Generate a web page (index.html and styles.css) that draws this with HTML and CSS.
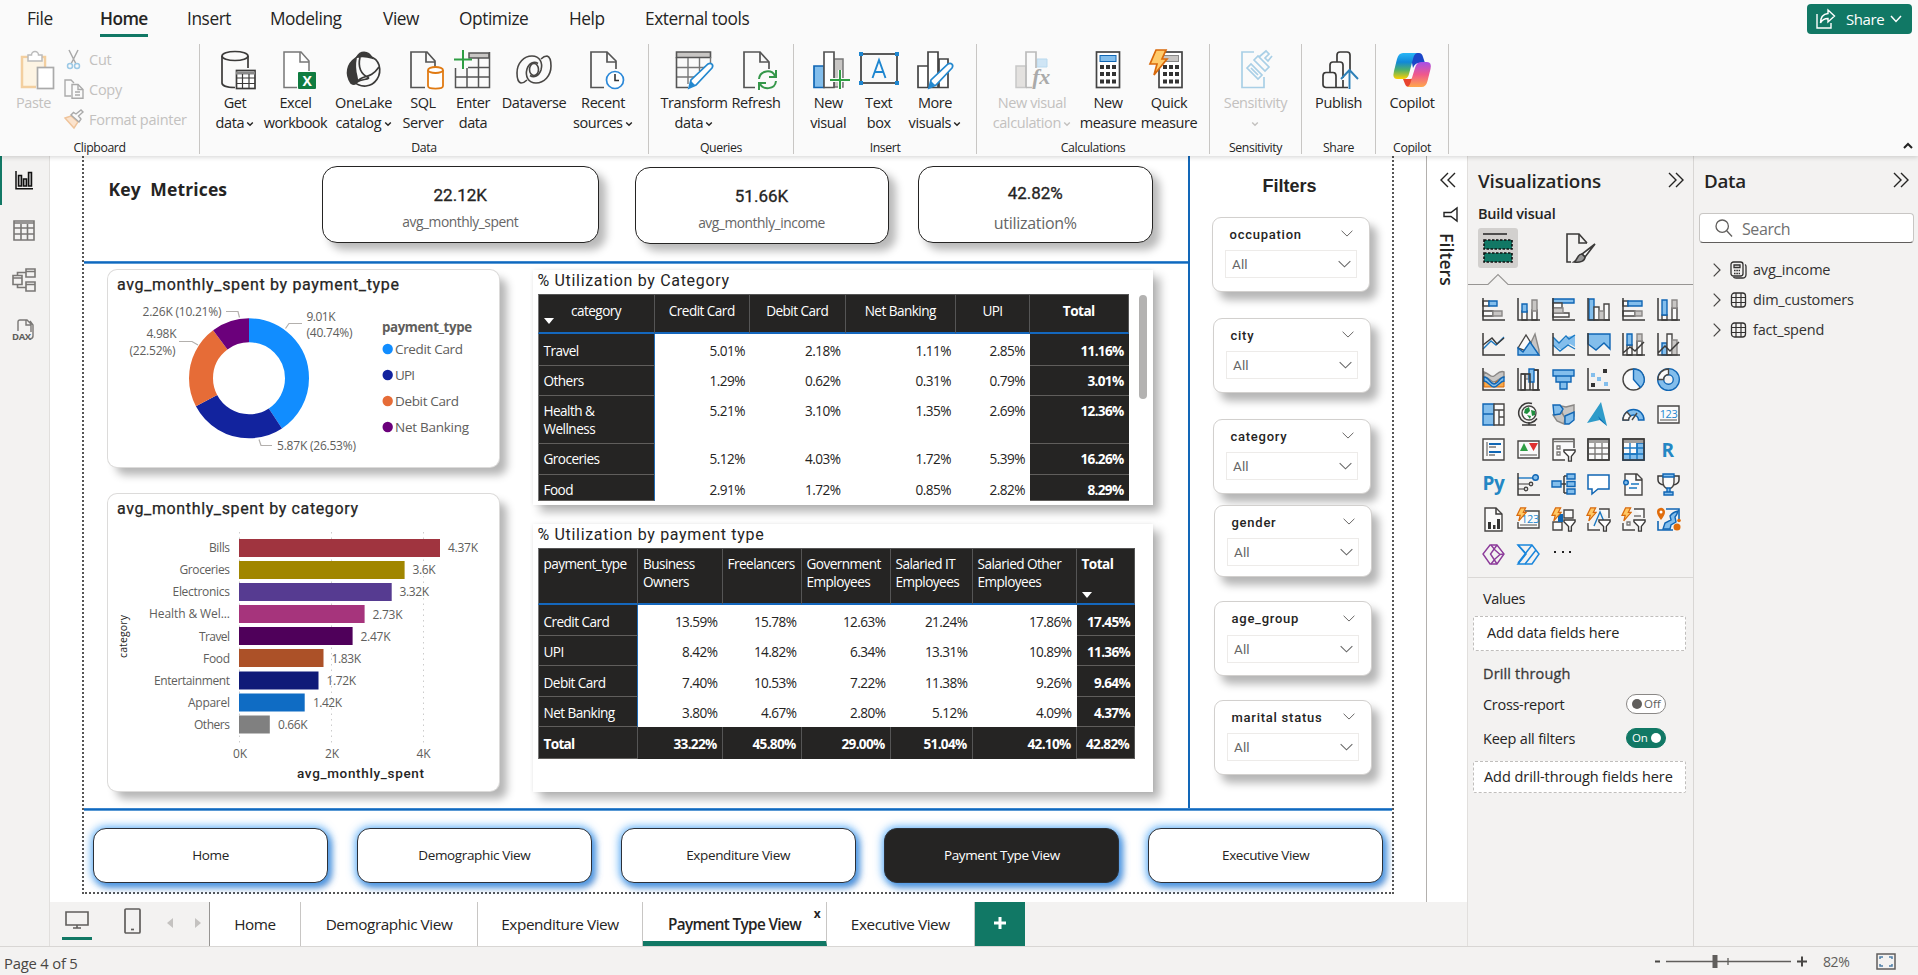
FILE: index.html
```html
<!DOCTYPE html>
<html lang="en">
<head>
<meta charset="utf-8">
<title>Payment Type View</title>
<link rel="stylesheet" href="styles.css">
</head>
<body>
<svg class="defs" width="0" height="0">
  <defs>
    <symbol id="chev" viewBox="0 0 10 6"><path d="M1.500 1l3.500 3.500L8.500 1" fill="none" stroke="currentColor" stroke-width="1.800"/></symbol>
    <symbol id="thin" viewBox="0 0 14 8"><path d="M.7 .8L7 7 13.3 .8" fill="none" stroke="currentColor" stroke-width="1.1"/></symbol>
    <symbol id="dbl" viewBox="0 0 16 16"><path d="M1 1l7 7-7 7M8 1l7 7-7 7" fill="none" stroke="currentColor" stroke-width="1.4"/></symbol>
    <symbol id="bolt" viewBox="0 0 12 16"><path d="M5 .8h5.500L8 5.600h3.200L3 15l1.600-6H1z" fill="#ffc864" stroke="#d9690b" stroke-width="1.3"/></symbol>
    <symbol id="funnel" viewBox="0 0 14 14"><path d="M1 1h12v2L9 8v5H6V8L1 3z" fill="#fff" stroke="#3b3a39" stroke-width="1.5"/></symbol>
    <symbol id="tbl" viewBox="0 0 16 16"><rect x="1" y="1" width="14" height="14" rx="3" fill="none" stroke="#323130" stroke-width="1.3"/><path d="M5.500 1v14M10.500 1v14M1 5.500h14M1 10.500h14" stroke="#323130" stroke-width="1.2"/></symbol>
    <linearGradient id="cpA" x1="0" y1="0" x2="0" y2="1"><stop offset="0" stop-color="#29b6f6"/><stop offset=".35" stop-color="#1088d8"/><stop offset=".65" stop-color="#4fb06a"/><stop offset="1" stop-color="#ffd000"/></linearGradient>
    <linearGradient id="cpB" x1="0" y1="0" x2="0" y2="1"><stop offset="0" stop-color="#a64fe8"/><stop offset=".5" stop-color="#f0588c"/><stop offset="1" stop-color="#ffa84c"/></linearGradient>
  </defs>
</svg>

<header class="ribbon">
  <nav class="menu">
    <span>File</span><span class="active"><b>Home</b></span><span>Insert</span><span>Modeling</span><span>View</span><span>Optimize</span><span>Help</span><span>External tools</span>
    <button class="share"><svg width="20" height="20" viewBox="0 0 20 20" fill="none" stroke="#fff" stroke-width="1.4"><path d="M1 5v14h14v-5"/><path d="M12 1l6.500 6L12 13V9.500C8 9.500 6 11 4.500 14 4.500 8.500 7.500 5 12 4.500z"/></svg><span>Share</span><svg width="12" height="8" viewBox="0 0 12 8" fill="none" stroke="#fff" stroke-width="1.5"><path d="M1 1l5 5.500L11 1"/></svg></button>
  </nav>
  <div class="groups">
    <section class="group g-clip">
      <div class="items">
        <div class="paste off"><svg width="36" height="40" viewBox="0 0 36 40" fill="none"><path d="M4 9h20v10h-6v17H4z" fill="#fdf4e3"/><path d="M9 7H3v30h14M23 7h3v11" stroke="#f3cf9f" stroke-width="2.500"/><path d="M9 5h3.500a3.500 3.500 0 0 1 7 0H23v6H9z" fill="#fff" stroke="#bbb" stroke-width="1.500"/><rect x="18.500" y="17.500" width="16" height="21" fill="#fff" stroke="#aaa" stroke-width="1.700"/></svg><span>Paste</span></div>
        <div class="clips off">
          <div><svg width="20" height="20" viewBox="0 0 20 20" fill="none"><path d="M5 1l7 14M14 1L7 15" stroke="#aaa" stroke-width="1.500"/><circle cx="6" cy="17" r="2.500" stroke="#9cc9e6" stroke-width="1.500"/><circle cx="13" cy="17" r="2.500" stroke="#9cc9e6" stroke-width="1.500"/></svg><span>Cut</span></div>
          <div><svg width="20" height="20" viewBox="0 0 20 20" fill="none" stroke="#aaa" stroke-width="1.400"><path d="M7 17H1V1h6l3 3"/><path d="M8 5.500h6l5 5V19.300H8z" fill="#fafafa"/><path d="M14 5.500v5h5M11 13h5M11 16h5"/></svg><span>Copy</span></div>
          <div><svg width="20" height="20" viewBox="0 0 20 20" fill="none"><path d="M1 9l6-2 7 6-4 6z" fill="#fbe3cd" stroke="#efc49b" stroke-width="1.400"/><path d="M7 6l8 7 2-3-2.500-3L19 3l-2-2-5 4-2.500-1.500z" fill="#fafafa" stroke="#aaa" stroke-width="1.400"/></svg><span>Format painter</span></div>
        </div>
      </div>
      <footer>Clipboard</footer>
    </section>
    <section class="group g-data">
      <div class="items">
        <div class="cmd sh5"><svg width="36" height="40" viewBox="0 0 36 40" fill="none" stroke="#3b3a39" stroke-width="1.700"><path d="M2 6v27c0 2.500 5 4.500 13 4.500M28 6v12"/><ellipse cx="15" cy="6" rx="13" ry="4.500"/><rect x="16.500" y="20.500" width="18.500" height="18" fill="#fff"/><path d="M16 23h19" stroke="#888" stroke-width="3"/><path d="M16 28h19M16 33.500h19M22.500 24v15M29 24v15" stroke-width="1.200"/></svg><span>Get<br>data <svg class="c"><use href="#chev"/></svg></span></div>
        <div class="cmd sh5"><svg width="36" height="40" viewBox="0 0 36 40" fill="none"><path d="M17 37.500H4V2h17l8 9v10" fill="#fff" stroke="#777" stroke-width="1.500"/><path d="M20 2v10h9" stroke="#777" stroke-width="1.500"/><rect x="18" y="22" width="18" height="17" rx="1" fill="#107c41"/><text x="27" y="36" class="xl">X</text></svg><span>Excel<br>workbook</span></div>
        <div class="cmd"><svg width="36" height="40" viewBox="0 0 36 40" fill="none" stroke="#3b3a39" stroke-width="1.700"><path d="M10 8C1 14-1 24 5 33c3 2 5 1 6-1 2-4-4-9-1-24z" fill="#3b3a39"/><path d="M11 7c3-6 11-7 15 1-6-2-10-2-15-1z" fill="#3b3a39"/><path d="M11 7c9-3 19-1 22 8 3 11-4 20-13 21-6 .500-10-2-13-5"/><path d="M14 7c-2 9 0 17 9 21M11 32c5-8 13-2 22-15M11 32c5-3 9-2 12-4"/></svg><span>OneLake<br>catalog <svg class="c"><use href="#chev"/></svg></span></div>
        <div class="cmd sh5"><svg width="36" height="40" viewBox="0 0 36 40" fill="none"><path d="M17 37.500H3V2h16l8 9v6" stroke="#555" stroke-width="1.700"/><path d="M18 2v10h9" stroke="#555" stroke-width="1.700"/><path d="M20 20v16c0 3.500 15 3.500 15 0V20" stroke="#e07a12" stroke-width="1.800" fill="#fff"/><ellipse cx="27.500" cy="20" rx="7.500" ry="3" fill="#fff" stroke="#e07a12" stroke-width="1.800"/></svg><span>SQL<br>Server</span></div>
        <div class="cmd"><svg width="38" height="40" viewBox="0 0 38 40" fill="none" stroke="#555"><path d="M15 3h20v5H15z" fill="#c8c6c4" stroke-width="1.500"/><path d="M35.500 2v35.500H1.500V18M1.500 27h34M14 17.500h21.500M13 18v19M24.500 8v29" stroke-width="1.500"/><path d="M0 9.500h18M9 0v19" stroke="#2f9e44" stroke-width="2"/></svg><span>Enter<br>data</span></div>
        <div class="cmd"><svg width="36" height="40" viewBox="0 0 36 40" fill="none" stroke="#484644" stroke-width="1.600"><path d="M11 30Q8 33 5 33Q1 32 1 23C1 13 8 6 16 6C24 6 27 13 25 20C23 26 18 28 14 25.500"/><path d="M25 9Q28 6 31 6Q35 7 35 16C35 26 28 33 20 33C12 33 9 26 11 19C13 13 18 11 22 13.500"/><ellipse cx="18" cy="19.500" rx="4.500" ry="6"/></svg><span>Dataverse</span></div>
        <div class="cmd sh5"><svg width="36" height="40" viewBox="0 0 36 40" fill="none"><path d="M16 37.500H3V2h16l9 9v8" stroke="#555" stroke-width="1.700"/><path d="M19 2v10h9" stroke="#555" stroke-width="1.700"/><circle cx="27" cy="30" r="8.500" fill="#fff" stroke="#2b88d8" stroke-width="1.700"/><path d="M27 24v6.500h4" stroke="#333" stroke-width="1.600"/></svg><span>Recent<br>sources <svg class="c"><use href="#chev"/></svg></span></div>
      </div>
      <footer>Data</footer>
    </section>
    <section class="group g-query">
      <div class="items">
        <div class="cmd"><svg width="38" height="40" viewBox="0 0 38 40" fill="none"><path d="M1.500 2h34v5.500h-34z" fill="#c8c6c4" stroke="#555" stroke-width="1.600"/><path d="M35.500 7v8M1.500 17.500h29M1.500 27h19M13 8v26M24.500 8v13" stroke="#777" stroke-width="1.400"/><path d="M1.500 7v30.500H13" stroke="#555" stroke-width="1.600"/><path d="M14 38l2-8 17-16c3-2 6 1 4 4L21 35z" fill="#fff" stroke="#2488cf" stroke-width="1.700"/><path d="M14 38l2-7 4 4z" fill="#2488cf"/></svg><span>Transform<br>data <svg class="c"><use href="#chev"/></svg></span></div>
        <div class="cmd sh2"><svg width="38" height="40" viewBox="0 0 38 40" fill="none"><path d="M16 37.500H5V2h16l9 10v7" stroke="#555" stroke-width="1.700"/><path d="M21 2v10h9" stroke="#555" stroke-width="1.700"/><path d="M20 29c1-9 13-10 16-3M37 31c-1 9-13 9-16 3" stroke="#35974a" stroke-width="2"/><path d="M37 20v7h-7M20 40v-7h7" stroke="#35974a" stroke-width="2"/></svg><span>Refresh</span></div>
      </div>
      <footer>Queries</footer>
    </section>
    <section class="group g-insert">
      <div class="items">
        <div class="cmd sh5"><svg width="38" height="40" viewBox="0 0 38 40"><path d="M22 9h9v28h-9z" fill="#c8c6c4" stroke="#777" stroke-width="1.500"/><path d="M2 16h10v21.500H2z" fill="#83beec" stroke="#1066b4" stroke-width="1.700"/><path d="M12 2h10v35.500H12z" fill="#fff" stroke="#555" stroke-width="1.700"/><path d="M18 30h20M28 20v19" stroke="#fafafa" stroke-width="4"/><path d="M18 30h20M28 20v19" stroke="#2f9e44" stroke-width="2"/></svg><span>New<br>visual</span></div>
        <div class="cmd"><svg width="40" height="40" viewBox="0 0 40 40" fill="none"><rect x="2" y="4" width="36" height="29" stroke="#333" stroke-width="1.600"/><path d="M0 2h4v4H0zM36 2h4v4h-4zM0 31h4v4H0zM36 31h4v4h-4z" fill="#1e86d0"/><path d="M13.500 28L20 10l6.500 18M16 22h8" stroke="#1e86d0" stroke-width="1.900"/></svg><span>Text<br>box</span></div>
        <div class="cmd"><svg width="38" height="40" viewBox="0 0 38 40" fill="#fff" stroke="#444" stroke-width="1.700"><path d="M23 9h9v28.500h-9zM2 16h10v21.500H2zM12 2h10v35.500H12z"/><path d="M13 38l2-8 17-16c3-2 6 1 4 4L20 35z" stroke="#2488cf"/><path d="M13 38l2-7 4 4z" fill="#2488cf" stroke="none"/></svg><span>More<br>visuals <svg class="c"><use href="#chev"/></svg></span></div>
      </div>
      <footer>Insert</footer>
    </section>
    <section class="group g-calc">
      <div class="items">
        <div class="cmd off"><svg width="38" height="40" viewBox="0 0 38 40"><path d="M24 9h10v8H24z" fill="#cfe5f5" stroke="#b9d9ee"/><path d="M3 16h10v21.500H3z" fill="#e3e1df" stroke="#c8c8c8" stroke-width="1.500"/><path d="M13 37.500V2h10v16M13 37.500h6" fill="none" stroke="#bbb" stroke-width="1.700"/><text x="28" y="34" class="fx">fx</text></svg><span>New visual<br>calculation <svg class="c"><use href="#chev"/></svg></span></div>
        <div class="cmd"><svg width="28" height="40" viewBox="0 0 28 40"><rect x="2.500" y="2" width="23" height="35.500" fill="#fff" stroke="#444" stroke-width="1.700"/><rect x="6" y="5.500" width="16" height="6" fill="#83beec" stroke="#1066b4"/><path d="M6 17h16M6 24h16M6 31.500h16" stroke="#333" stroke-width="4" stroke-dasharray="4 2"/></svg><span>New<br>measure</span></div>
        <div class="cmd sh-5"><svg width="36" height="40" viewBox="0 0 36 40"><rect x="11" y="2" width="23" height="35.500" fill="#fff" stroke="#444" stroke-width="1.700"/><rect x="14.500" y="5.500" width="16" height="6" fill="#c8c6c4" stroke="#888"/><path d="M15 17h16M15 24h16M15 31.500h16" stroke="#333" stroke-width="4" stroke-dasharray="4 2"/><path d="M8 0h10l-4 9h5L6 25l3-11H2z" fill="#ffcb6b" stroke="#d9690b" stroke-width="1.700"/></svg><span>Quick<br>measure</span></div>
      </div>
      <footer>Calculations</footer>
    </section>
    <section class="group g-sens">
      <div class="items">
        <div class="cmd off sh5"><svg width="38" height="40" viewBox="0 0 38 40" fill="none" stroke="#a9cfe6" stroke-width="1.700"><path d="M15 2H3v35.500h22V27"/><path d="M8 18l4-4 11 11-4 4zM12 18l7 7"/><path d="M15 10l4-4 11 11-4 4z" fill="#fafafa"/><path d="M20 7l7-6 3 3-4 4 3 3 4-5"/></svg><span>Sensitivity<br><svg class="c"><use href="#chev"/></svg></span></div>
      </div>
      <footer>Sensitivity</footer>
    </section>
    <section class="group g-pub">
      <div class="items">
        <div class="cmd sh2"><svg width="38" height="40" viewBox="0 0 38 40" fill="none" stroke="#3b3a39" stroke-width="1.700"><path d="M16 12V5q0-3 3-3h7q3 0 3 3v15M9 22v-7q0-3 3-3h7q3 0 3 3v13M2 26q0-3.500 3-3.500h7q3 0 3 3.500v11.500H5q-3 0-3-3zM15 37.500h12M22 30v7"/><path d="M28.500 39V20M20 29l8.500-9 8.500 9" stroke="#2e80b8" stroke-width="1.900"/></svg><span>Publish</span></div>
      </div>
      <footer>Share</footer>
    </section>
    <section class="group g-cop">
      <div class="items">
        <div class="cmd"><svg width="38" height="36" viewBox="0 0 38 36"><path d="M17 1h9q3 0 4 4l2 6h-6q-4 0-6 5z" fill="#1b46c8"/><path d="M10 1h14q-3 1-4 6l-4 15q-1 5-6 5H4q-5 0-3-8L4 7q1.500-6 6-6z" fill="url(#cpA)"/><path d="M10 27h7q4 0 5-4l-3 12h-3q-3 0-4-3z" fill="#e8442e"/><path d="M28 10h6q5 0 3.500 7l-3 12q-1.500 6-6 6H14q3-1 4-6l4-13q1.500-6 6-6z" fill="url(#cpB)"/></svg><span>Copilot</span></div>
      </div>
      <footer>Copilot</footer>
    </section>
    <svg class="collapse" width="10" height="7" viewBox="0 0 10 7"><path d="M1 6l4-4 4 4" fill="none" stroke="#222" stroke-width="2"/></svg>
  </div>
</header>

<div class="workspace">
  <aside class="rail">
    <div class="on"><svg width="18" height="19" viewBox="0 0 18 19" fill="none" stroke="#111" stroke-width="1.500"><path d="M1 0v17.800h17"/><path d="M3.500 4.500h3v10.500h-3zM8.500 8h3v7h-3zM13.500 1.500h3v13.500h-3z" fill="#bbb"/></svg></div>
    <div><svg width="22" height="21" viewBox="0 0 22 21" fill="none" stroke="#797775" stroke-width="1.600"><path d="M1 1h20v19H1z"/><path d="M1 3h20M1 8h20M1 14h20M8 4v16M14.500 4v16"/></svg></div>
    <div><svg width="24" height="24" viewBox="0 0 24 24" fill="none" stroke="#797775" stroke-width="1.600"><path d="M1 7.500h9v9H1zM14 1h9v8h-9zM14 14h9v9h-9zM1 10h9M14 3.500h9M14 16.500h9M5.500 7V4.500H14M5.500 17v2.500H14"/></svg></div>
    <div><svg width="24" height="23" viewBox="0 0 24 23" fill="none" stroke="#797775" stroke-width="1.400"><path d="M6 12V3q0-2 2-2h7l4 4v8M14 1v5h5M18 2l3 4v11q0 2.500-3 3"/><text x="0" y="20.500" class="dax">DAX</text></svg></div>
  </aside>

  <main class="main">
    <div class="stage">
      <div class="canvas">
        <div class="page">
          <div class="page-top">
            <div class="analysis">
              <div class="kpis">
                <h2>Key&nbsp; Metrices</h2>
                <div class="kpi k1"><b>22.12K</b><span>avg_monthly_spent</span></div>
                <div class="kpi k2"><b>51.66K</b><span>avg_monthly_income</span></div>
                <div class="kpi k3"><b>42.82%</b><span>utilization%</span></div>
              </div>
              <div class="rule"></div>
              <div class="visuals">
                <div class="col-charts">
                  <svg class="card" width="391" height="197" viewBox="108 270 391 197">
                    <text class="din t" x="117" y="289.500" textLength="282">avg_monthly_spent by payment_type</text>
                    <g fill="none" stroke-width="24">
                      <circle class="arc" cx="249" cy="378.300" r="48" pathLength="100" stroke="#118dff" stroke-dasharray="40.740 59.260"/>
                      <circle class="arc" cx="249" cy="378.300" r="48" pathLength="100" stroke="#12239e" stroke-dasharray="26.530 73.470" stroke-dashoffset="-40.740"/>
                      <circle class="arc" cx="249" cy="378.300" r="48" pathLength="100" stroke="#e66c37" stroke-dasharray="22.520 77.480" stroke-dashoffset="-67.270"/>
                      <circle class="arc" cx="249" cy="378.300" r="48" pathLength="100" stroke="#6b007b" stroke-dasharray="10.210 89.790" stroke-dashoffset="-89.790"/>
                    </g>
                    <path d="M226 311.500h12l1.500 6M302 323.500h-13l-3.500 5M179 341.500h13l6 3.500M272 445.500h-11l-2-6" fill="none" stroke="#b3b0ad" stroke-width="1.200"/>
                    <g class="lab">
                      <text x="142.500" y="316" textLength="79">2.26K (10.21%)</text>
                      <text x="306.500" y="321" textLength="29">9.01K</text><text x="306.500" y="337" textLength="46">(40.74%)</text>
                      <text x="146.500" y="338" textLength="30">4.98K</text><text x="129.500" y="355" textLength="46">(22.52%)</text>
                      <text x="277" y="450" textLength="79">5.87K (26.53%)</text>
                    </g>
                    <text class="lab lt" x="382" y="332" textLength="90">payment_type</text>
                    <g class="lab lg">
                      <circle cx="387.700" cy="349" r="5.200" fill="#118dff"/><text x="395" y="354" textLength="68">Credit Card</text>
                      <circle cx="387.700" cy="375" r="5.200" fill="#12239e"/><text x="395" y="380" textLength="20">UPI</text>
                      <circle cx="387.700" cy="401" r="5.200" fill="#e66c37"/><text x="395" y="406" textLength="64">Debit Card</text>
                      <circle cx="387.700" cy="427" r="5.200" fill="#6b007b"/><text x="395" y="432" textLength="74">Net Banking</text>
                    </g>
                  </svg>
                  <svg class="card" width="391" height="297" viewBox="108 494 391 297">
                    <text class="din t" x="117" y="514" textLength="241">avg_monthly_spent by category</text>
                    <path d="M239.500 532v212M331.500 532v212M423.500 532v212" stroke="#ccc" stroke-width="1" stroke-dasharray="1.500 4"/>
                    <g>
                      <rect x="239" y="539" width="201" height="18" fill="#a0343f"/><rect x="239" y="561" width="165.600" height="18" fill="#a18600"/><rect x="239" y="583" width="152.700" height="18" fill="#563b91"/><rect x="239" y="605" width="125.600" height="18" fill="#a6347c"/><rect x="239" y="627" width="113.600" height="18" fill="#4f005a"/><rect x="239" y="649" width="84.500" height="18" fill="#ac5128"/><rect x="239" y="671.500" width="79.500" height="18" fill="#0f1a78"/><rect x="239" y="693.500" width="65.700" height="18" fill="#0f6cc4"/><rect x="239" y="715.500" width="30.800" height="18" fill="#808080"/>
                    </g>
                    <g class="lab">
                      <text x="209" y="552" textLength="21">Bills</text><text x="179.500" y="574" textLength="50.500">Groceries</text><text x="172.500" y="596" textLength="57.500">Electronics</text><text x="149" y="618" textLength="81">Health &amp; Wel...</text><text x="199" y="640.500" textLength="31">Travel</text><text x="203" y="662.500" textLength="27">Food</text><text x="154" y="684.500" textLength="76">Entertainment</text><text x="188" y="706.500" textLength="42">Apparel</text><text x="194" y="728.500" textLength="36">Others</text>
                      <text x="448" y="552" textLength="30">4.37K</text><text x="412.500" y="574" textLength="23">3.6K</text><text x="399.500" y="596" textLength="29.500">3.32K</text><text x="372.500" y="618.500" textLength="30">2.73K</text><text x="360.500" y="640.500" textLength="30">2.47K</text><text x="331.500" y="662.500" textLength="29.500">1.83K</text><text x="326.500" y="684.500" textLength="29.500">1.72K</text><text x="313" y="706.500" textLength="29">1.42K</text><text x="278" y="728.500" textLength="29.500">0.66K</text>
                      <text x="233" y="757.500" textLength="14">0K</text><text x="325" y="757.500" textLength="14">2K</text><text x="416.500" y="757.500" textLength="14">4K</text>
                    </g>
                    <text class="din ax" x="297" y="778" textLength="127">avg_monthly_spent</text>
                    <text class="lab cat" transform="translate(126.500 658) rotate(-90)" textLength="43">category</text>
                  </svg>
                </div>
                <div class="col-tables">
                  <div class="tile t1">
                    <h3>% Utilization by Category</h3>
                    <div class="scroll">
                      <div class="mx">
                        <div class="hd"><span><i class="tri"></i>category</span><span>Credit Card</span><span>Debit Card</span><span>Net Banking</span><span>UPI</span><span><b>Total</b></span></div>
                        <div class="r1"><span>Travel</span><span>5.01%</span><span>2.18%</span><span>1.11%</span><span>2.85%</span><b>11.16%</b></div>
                        <div class="r2"><span>Others</span><span>1.29%</span><span>0.62%</span><span>0.31%</span><span>0.79%</span><b>3.01%</b></div>
                        <div class="r3"><span>Health &amp;<br>Wellness</span><span>5.21%</span><span>3.10%</span><span>1.35%</span><span>2.69%</span><b>12.36%</b></div>
                        <div class="r4"><span>Groceries</span><span>5.12%</span><span>4.03%</span><span>1.72%</span><span>5.39%</span><b>16.26%</b></div>
                        <div class="r5"><span>Food</span><span>2.91%</span><span>1.72%</span><span>0.85%</span><span>2.82%</span><b>8.29%</b></div>
                      </div>
                      <div class="bar"></div>
                    </div>
                  </div>
                  <div class="tile t2">
                    <h3>% Utilization by payment type</h3>
                    <div class="mx">
                      <div class="hd"><span>payment_type</span><span>Business<br>Owners</span><span>Freelancers</span><span>Government<br>Employees</span><span>Salaried IT<br>Employees</span><span>Salaried Other<br>Employees</span><span><b>Total</b><i class="tri"></i></span></div>
                      <div><span>Credit Card</span><span>13.59%</span><span>15.78%</span><span>12.63%</span><span>21.24%</span><span>17.86%</span><b>17.45%</b></div>
                      <div><span>UPI</span><span>8.42%</span><span>14.82%</span><span>6.34%</span><span>13.31%</span><span>10.89%</span><b>11.36%</b></div>
                      <div><span>Debit Card</span><span>7.40%</span><span>10.53%</span><span>7.22%</span><span>11.38%</span><span>9.26%</span><b>9.64%</b></div>
                      <div><span>Net Banking</span><span>3.80%</span><span>4.67%</span><span>2.80%</span><span>5.12%</span><span>4.09%</span><b>4.37%</b></div>
                      <div class="sum"><span>Total</span><span>33.22%</span><span>45.80%</span><span>29.00%</span><span>51.04%</span><span>42.10%</span><b>42.82%</b></div>
                    </div>
                  </div>
                </div>
              </div>
            </div>
            <div class="slicers">
              <h2>Filters</h2>
              <div class="slicer s1"><p>occupation<svg><use href="#thin"/></svg></p><div>All<svg><use href="#thin"/></svg></div></div>
              <div class="slicer s2"><p>city<svg><use href="#thin"/></svg></p><div>All<svg><use href="#thin"/></svg></div></div>
              <div class="slicer s3"><p>category<svg><use href="#thin"/></svg></p><div>All<svg><use href="#thin"/></svg></div></div>
              <div class="slicer s4"><p>gender<svg><use href="#thin"/></svg></p><div>All<svg><use href="#thin"/></svg></div></div>
              <div class="slicer s5"><p>age_group<svg><use href="#thin"/></svg></p><div>All<svg><use href="#thin"/></svg></div></div>
              <div class="slicer s6"><p>marital status<svg><use href="#thin"/></svg></p><div>All<svg><use href="#thin"/></svg></div></div>
            </div>
          </div>
          <div class="rule"></div>
          <div class="pagenav"><span>Home</span><span>Demographic View</span><span>Expenditure View</span><span class="cur">Payment Type View</span><span>Executive View</span></div>
        </div>
      </div>
      <aside class="filters-pane">
        <svg class="flip" width="16" height="16"><use href="#dbl"/></svg>
        <svg class="fun" width="15" height="15" viewBox="0 0 15 15" fill="none" stroke="#222" stroke-width="1.400"><path d="M14 1v13l-6-4.500H1v-4h7z"/></svg>
        <span>Filters</span>
      </aside>
    </div>
    <div class="tabs">
      <div class="devices">
        <div class="pc"><svg width="24" height="18" viewBox="0 0 24 18" fill="none" stroke="#605e5c" stroke-width="1.600"><path d="M1 1h22v13H1zM12 14v3M8 17h8"/></svg></div>
        <svg width="17" height="26" viewBox="0 0 17 26" fill="none" stroke="#605e5c" stroke-width="1.700"><rect x="1" y="1" width="15" height="24" rx="1"/><path d="M7 21.500h3"/></svg>
        <svg class="a1" width="6" height="10"><path d="M6 0v10L0 5z" fill="#c4c2c0"/></svg>
        <svg class="a2" width="6" height="10"><path d="M0 0v10l6-5z" fill="#c4c2c0"/></svg>
      </div>
      <span class="w1">Home</span><span class="w2">Demographic View</span><span class="w3">Expenditure View</span><span class="w4 cur">Payment Type View<i>x</i></span><span class="w5">Executive View</span>
      <button class="add"><svg width="14" height="14"><path d="M7 1v12M1 7h12" stroke="#fff" stroke-width="3"/></svg></button>
    </div>
  </main>

  <aside class="viz">
    <div class="phead"><h1>Visualizations</h1><svg width="16" height="16"><use href="#dbl"/></svg></div>
    <h4>Build visual</h4>
    <div class="modes">
      <div class="sel"><svg width="30" height="31" viewBox="0 0 30 31"><path d="M0 1h24" stroke="#222" stroke-width="1.500"/><path d="M1 7h28v9H1zM1 20h28v9H1z" fill="#117865" stroke="#111" stroke-width="1.600" stroke-dasharray="2.500 1.500"/></svg></div>
      <svg width="30" height="30" viewBox="0 0 30 30" fill="none" stroke="#3b3a39" stroke-width="1.600"><path d="M5 29H1V1h12l8 9"/><path d="M13 1v9h8"/><path d="M29 11L19 24l-3-3z" fill="#fff"/><path d="M16 21l3 3c0 4-5 6-11 5 4-2 3-8 8-8z" fill="#999"/></svg>
    </div>
    <svg class="notch" width="225" height="12" viewBox="0 0 225 12"><path d="M0 10.500h20l10-10 10 10h185" fill="none" stroke="#979593" stroke-width="1.100"/></svg>
    <div class="grid">
      <svg viewBox="0 0 23 23"><path d="M1 3h6v5H1zM1 13h10v5H1z" class="w"/><path d="M7 3h8v5H7z" class="b"/><path d="M11 13h9v5h-9z" class="g"/><path d="M1 0v22h22" class="x"/></svg>
      <svg viewBox="0 0 23 23"><path d="M5 13h5v9H5zM15 12h5v10h-5z" class="w"/><path d="M5 6h5v8H5z" class="b"/><path d="M15 2h5v11h-5z" class="g"/><path d="M1 0v22h22" class="x"/></svg>
      <svg viewBox="0 0 23 23"><path d="M1 1h21v4H1z" class="b"/><path d="M1 5h9v5H1zM1 15h16v4H1z" class="w"/><path d="M1 10h10v5H1z" class="g"/><path d="M1 0v22h22" class="x"/></svg>
      <svg viewBox="0 0 23 23"><path d="M2 1h5v21H2z" class="b"/><path d="M7 9h5v13H7zM17 6h5v16h-5z" class="w"/><path d="M12 13h5v9h-5z" class="g"/><path d="M1 0v22h22" class="x"/></svg>
      <svg viewBox="0 0 23 23"><path d="M1 3h5v5H1zM1 13h12v5H1z" class="w"/><path d="M6 3h14v5H6z" class="b"/><path d="M13 13h7v5h-7z" class="g"/><path d="M1 0v22h22" class="x"/></svg>
      <svg viewBox="0 0 23 23"><path d="M5 17h5v5H5zM15 10h5v12h-5z" class="w"/><path d="M5 2h5v15H5z" class="b"/><path d="M15 2h5v8h-5z" class="g"/><path d="M1 0v22h22" class="x"/></svg>

      <svg viewBox="0 0 23 23"><path d="M1 16l8-8 5 4 8-8" class="lb"/><path d="M1 12l9-7 5 6 7-6" class="ld"/><path d="M1 0v22h22" class="x"/></svg>
      <svg viewBox="0 0 23 23"><path d="M10 18l8-17 4 16v5z" class="g"/><path d="M1 15L9 2l5 8-5 8z" class="w"/><path d="M1 22v-7l5 4 7-10 9 13z" class="b"/></svg>
      <svg viewBox="0 0 23 23"><path d="M1 4l6 6 8-6 8-2v12l-5-3-8 6-9-5z" class="bn"/><path d="M1 4l6 6 7-7 3 3 6-4M1 12l7 6 8-6 7 4" class="lb"/><path d="M1 0v22h22" class="x"/></svg>
      <svg viewBox="0 0 23 23"><path d="M1 1h22v15l-6-6-8 7-8-6z" class="b"/><path d="M1 0v22h22" class="x"/></svg>
      <svg viewBox="0 0 23 23"><path d="M5 12h5v10H5zM15 8h5v14h-5z" class="w"/><path d="M5 1h5v11H5z" class="b"/><path d="M15 1h5v7h-5z" class="g"/><path d="M1 20l7-6 5 4 9-9M1 0v22h22" class="x"/></svg>
      <svg viewBox="0 0 23 23"><path d="M5 10h5v12H5z" class="b"/><path d="M10 1h5v21h-5z" class="w"/><path d="M15 7h5v15h-5z" class="g"/><path d="M1 20l7-7 5 5 9-9M1 0v22h22" class="x"/></svg>

      <svg viewBox="0 0 23 23"><path d="M2 4c6 2 7 6 10 4s6-6 10-4v5c-4 0-7 5-10 5S7 9 2 9z" class="g"/><path d="M2 13h5l4 4 4-4h7v6H2z" class="o"/><path d="M2 9c5 0 6 7 10 7s6-7 10-7v4c-4 0-6 6-10 6S6 13 2 13z" class="b"/><path d="M1 0v22h22" class="x"/></svg>
      <svg viewBox="0 0 23 23"><path d="M4 6h4v16H4zM16 2h5v20h-5z" class="w"/><path d="M8 6h4v5H8z" class="g"/><path d="M12 1h5v13h-5z" class="b"/><path d="M4 6h4v16M8 6h5v16M17 2h4v20M1 0v22h22" class="x"/></svg>
      <svg viewBox="0 0 23 23"><path d="M1 2h21v6H1zM4 8h15v6H4zM8 14h7v7H8z" class="b"/></svg>
      <svg viewBox="0 0 23 23"><path d="M4 5h4v4H4zM10 9h4v4h-4zM17 14h4v4h-4z" fill="#83beec"/><path d="M16 1h4v4h-4zM4 15h4v4H4z" fill="#333"/><path d="M1 0v22h22" class="x"/></svg>
      <svg viewBox="0 0 23 23"><circle cx="11.500" cy="11.500" r="10.500" class="w"/><path d="M11.500 1a10.500 10.500 0 0 1 7 18.500l-7-8z" class="b"/></svg>
      <svg viewBox="0 0 23 23"><circle cx="11.500" cy="11.500" r="7.800" fill="none" stroke="#1066b4" stroke-width="7.400"/><circle cx="11.500" cy="11.500" r="7.800" fill="none" stroke="#83beec" stroke-width="4.800"/><path d="M11.500 1A10.500 10.500 0 0 0 1 11.500h5.500a5 5 0 0 1 5-5z" class="w"/></svg>

      <svg viewBox="0 0 23 23"><path d="M1 1h11v10H1zM1 11h11v11H1z" class="b"/><path d="M12 1h10v6H12zM12 7h5v15h-5zM17 7h5v7h-5zM17 14h5v8h-5z" class="w"/></svg>
      <svg viewBox="0 0 23 23"><circle cx="12" cy="10" r="7" class="w"/><path d="M8 6l4-2 1 4-3 3-3-1zM14 7l4 1v4l-3 1zM10 12l4 1-1 3z" fill="#1e8e3e"/><path d="M15 0.500a10 10 0 1 0 5 15M12 19v3M5 22h14" class="ld"/></svg>
      <svg viewBox="0 0 23 23"><path d="M9 3l5 1 8-2v11l-6 3-5-3z" class="g"/><path d="M1 12l9-2 3 5-1 6-7-3z" class="g"/><path d="M1 2h7l3 4-3 5-6 1zM13 13l9-4v8l-5 4-4 0z" class="b"/></svg>
      <svg viewBox="0 0 23 23"><path d="M14-1l6 24-7-6-13 3z" fill="#2e9bc9"/><path d="M13 17l-2-4 9 10z" fill="#0063b1"/></svg>
      <svg viewBox="0 0 23 23"><path d="M1 17a10.500 10.500 0 0 1 21 0h-5.500a5 5 0 0 0-10 0z" class="b"/><path d="M1 17a10.500 10.500 0 0 1 4-8l3.500 4a5 5 0 0 0-2 4zM10 17l5-7" class="w"/></svg>
      <svg viewBox="0 0 23 23"><path d="M1 3h21v17H1z" class="w"/><path d="M3 17h17" class="lg2"/><text x="11.500" y="15" class="n">123</text></svg>

      <svg viewBox="0 0 23 23"><path d="M1 1h21v21H1z" class="w"/><path d="M5 4v14M7 9h7M7 17h6" class="lg2"/><path d="M7 6h12M7 14h12" class="lb2"/></svg>
      <svg viewBox="0 0 23 23"><path d="M1 3h21v17H1z" class="w"/><path d="M3 17h17" class="lg2"/><path d="M3 13l4-8 4 8z" fill="#2f9e44"/><path d="M12 5h9l-4.500 8z" fill="#e03131"/></svg>
      <svg viewBox="0 0 23 23"><path d="M13 22H1V1h21v9" class="w"/><path d="M1 3.500h21M5 8h3v3H5zM5 14h3v3H5z" class="lg2"/><use href="#funnel" x="11" y="11" width="13" height="13"/></svg>
      <svg viewBox="0 0 23 23"><path d="M1 1h21v21H1z" class="w"/><path d="M1 3.500h21" stroke="#a19f9d" stroke-width="3"/><path d="M1 10h21M1 16h21M8 5v17M15 5v17" class="lg2"/><path d="M1 1h21v21H1z" class="x"/></svg>
      <svg viewBox="0 0 23 23"><path d="M1 1h21v21H1z" class="w"/><path d="M15 5h7v17H1v-6h14z" class="b"/><path d="M1 3.500h21" stroke="#a19f9d" stroke-width="3"/><path d="M1 10h21M8 5v17M15 5v17M1 16h21" class="lb"/><path d="M1 1h21v21H1z" class="x"/></svg>
      <svg viewBox="0 0 23 23"><text x="10.500" y="19" class="big">R</text></svg>

      <svg viewBox="0 0 23 23"><text x="11.500" y="17" class="big">Py</text></svg>
      <svg viewBox="0 0 23 23"><path d="M1 5h15" class="lb"/><circle cx="18.500" cy="4.500" r="2.800" class="b"/><path d="M1 11h12M1 16h7" class="lg2"/><circle cx="14" cy="11" r="1.700" class="w"/><circle cx="9" cy="16" r="1.700" class="w"/><path d="M1 0v22h22" class="x"/></svg>
      <svg viewBox="0 0 23 23"><path d="M9 11h5M12 3v17M12 3h3M12 20h3" class="ld"/><path d="M0 8h9v6H0zM15 1h8v5h-8zM15 8.500h8v5h-8zM15 16h8v5h-8z" class="b"/></svg>
      <svg viewBox="0 0 23 23"><path d="M1 2h21v14h-11l-6 5v-5H1z" fill="#fff" stroke="#1066b4" stroke-width="1.500"/></svg>
      <svg viewBox="0 0 23 23"><path d="M3 8V1h12l5 5v16H3V12" class="w"/><path d="M14 1v6h6" class="ld"/><circle cx="4" cy="9.500" r="2.300" class="b"/><path d="M9 11h8M7 15h8" class="lb"/></svg>
      <svg viewBox="0 0 23 23"><path d="M6 3H1v4q0 4 6 5M17 3h5v4q0 4-6 5" class="ld"/><path d="M6 3h11v6q0 6-5.500 7Q6 15 6 9z" class="w"/><path d="M6 1h11v3H6zM7 19h9v3H7zM10 15h3v4h-3z" class="b"/></svg>

      <svg viewBox="0 0 23 23"><path d="M3 0h11l6 6v17H3z" class="w"/><path d="M14 0v6h6" class="ld"/><path d="M6 14h3v7H6zM11 17h2.500v4H11zM15 11h3v10h-3z" fill="#333"/></svg>
      <svg viewBox="0 0 23 23"><path d="M8 3h14v17H1v-6" class="w"/><path d="M3 17h17" class="lg2"/><text x="13" y="15" class="n">123</text><use href="#bolt" x="-1" y="-1" width="11" height="15"/></svg>
      <svg viewBox="0 0 23 23"><path d="M12 2h9v8h-9zM1 14h9v8H1z" class="w"/><path d="M6 6h5v8H6z" fill="#1066b4"/><use href="#bolt" x="-1" y="-1" width="11" height="15"/><use href="#funnel" x="11" y="11" width="13" height="13"/></svg>
      <svg viewBox="0 0 23 23"><path d="M12 1h10v9M13 22H1v-7" class="w"/><path d="M7 18l6-14 5 12" class="lb"/><use href="#bolt" x="-1" y="-1" width="11" height="15"/><use href="#funnel" x="11" y="11" width="13" height="13"/></svg>
      <svg viewBox="0 0 23 23"><path d="M12 1h10v9M13 22H1v-7" class="w"/><path d="M12 8h7M5 14h3v3H5z" class="lg2"/><use href="#bolt" x="-1" y="-1" width="11" height="15"/><use href="#funnel" x="11" y="11" width="13" height="13"/></svg>
      <svg viewBox="0 0 23 23"><path d="M9 1h13v10M16 22H1V13" fill="none" stroke="#1066b4" stroke-width="1.600"/><path d="M21 3q-5 1-8 5l1 4-6 3-2 6h7l1-4 5-3-1-5q2-2 3-6z" class="b"/><path d="M3 0a4 4 0 0 1 5 4q0 3-4 8-4-5-4-8a4 4 0 0 1 3-4z" fill="#e06c0a"/><circle cx="4" cy="4" r="1.500" fill="#fff"/><circle cx="20" cy="19" r="3.500" fill="#e06c0a"/><circle cx="22" cy="12.500" r="1.800" fill="#e06c0a"/></svg>

      <svg viewBox="0 0 23 23"><path d="M8 2h7l7 9-7 10H8L1 11z" class="p"/><path d="M15 2L8.500 11 15 21M9 2l4 5M9 21l4-5M13 7l5 4.500-5 4.500M18 11.500L22 11" class="p"/></svg>
      <svg viewBox="0 0 23 23"><path d="M1 2h14l7 9-7 10H1l8-10z" class="y"/><path d="M1 20L15 2M8 21L19 7M1 2l8 9" class="y"/></svg>
      <svg viewBox="0 0 23 23"><path d="M2 9h2M10 9h2M17 9h2" stroke="#222" stroke-width="2.200"/></svg>
    </div>
    <div class="wells">
      <label>Values</label>
      <div class="well v1">Add data fields here</div>
      <label class="dt">Drill through</label>
      <div class="opt"><span>Cross-report</span><div class="tog"><i></i>Off</div></div>
      <div class="opt o2"><span>Keep all filters</span><div class="tog onn">On<i></i></div></div>
      <div class="well v2">Add drill-through fields here</div>
    </div>
  </aside>

  <aside class="data">
    <div class="phead"><h1 class="dh">Data</h1><svg width="16" height="16"><use href="#dbl"/></svg></div>
    <div class="search"><svg width="18" height="18" viewBox="0 0 18 18" fill="none" stroke="#605e5c" stroke-width="1.300"><circle cx="7.200" cy="7.200" r="6.200"/><path d="M11.700 11.700L17 17.500"/></svg><span>Search</span></div>
    <div class="tree">
      <div><svg class="ar" viewBox="0 0 8 14"><path d="M.7 .7L7 7 .7 13.300" fill="none" stroke="#484644" stroke-width="1.200"/></svg><svg width="17" height="18" viewBox="0 0 17 18" fill="none" stroke="#323130" stroke-width="1.300"><rect x="1" y="1" width="12" height="14" rx="2.500"/><path d="M15 3.500q1 .5 1 2v8q0 3.500-3.500 3.500H6q-2 0-2.500-1M4 4h6v2.500H4z"/><path d="M4 9.500h6M4 12.500h6" stroke-width="1.600" stroke-dasharray="1.600 .7"/></svg>avg_income</div>
      <div><svg class="ar" viewBox="0 0 8 14"><path d="M.7 .7L7 7 .7 13.300" fill="none" stroke="#484644" stroke-width="1.200"/></svg><svg width="17" height="16"><use href="#tbl"/></svg>dim_customers</div>
      <div><svg class="ar" viewBox="0 0 8 14"><path d="M.7 .7L7 7 .7 13.300" fill="none" stroke="#484644" stroke-width="1.200"/></svg><svg width="17" height="16"><use href="#tbl"/></svg>fact_spend</div>
    </div>
  </aside>
</div>

<footer class="status">
  <span>Page 4 of 5</span>
  <div class="zoom"><svg width="152" height="16" viewBox="0 0 152 16"><path d="M0 7.500h5M142 7.500h10M147 2.500v10" stroke="#484644" stroke-width="2"/><path d="M11 7.500h125M73 4v7" stroke="#605e5c" stroke-width="1.300"/><path d="M60 1v13" stroke="#605e5c" stroke-width="5"/></svg><span>82%</span><svg width="20" height="17" viewBox="0 0 20 17" fill="none" stroke="#605e5c" stroke-width="1.500"><path d="M1 1h18v15H1z"/><path d="M4 6V4h3M13 4h3v2M4 11v2h3M13 13h3v-2" stroke="#4d7fa8"/></svg></div>
</footer>
</body>
</html>
```
FILE: styles.css
```css
* { box-sizing: border-box; }
body { margin: 0; width: 1918px; height: 975px; overflow: hidden; display: flex; flex-direction: column; background: #fff; color: #252423; font: 14.5px "Open Sans", "Noto Sans", sans-serif; letter-spacing: -0.4px; }
svg { flex: none; display: block; overflow: visible; }
.defs { position: absolute; }
h1, h2, h3, h4, p { margin: 0; font-weight: 600; white-space: nowrap; }
button { border: 0; padding: 0; font: inherit; letter-spacing: inherit; }

/* Ribbon */
.ribbon { height: 156px; flex: none; background: #fafafa; box-shadow: 0 1px 5px rgba(0,0,0,.18); position: relative; z-index: 2; }
.menu { height: 44px; padding: 0 6px 0 27px; display: grid; grid-template-columns: 73px 87px 83px 113px 76px 110px 76px 1fr auto; font-size: 17.3px; letter-spacing: -0.42px; line-height: 38px; white-space: nowrap; }
.menu b { display: inline-block; height: 37px; font-weight: 600; border-bottom: 3px solid #117865; letter-spacing: -0.55px; }
.share { margin-top: 4px; width: 105px; height: 30px; border-radius: 4px; background: #117865; color: #fff; display: flex; align-items: center; gap: 10px; padding-left: 9px; font-size: 15px; line-height: 28px; }
.share svg:last-child { margin-left: -4px; }
.groups { display: flex; height: 112px; }
.group { height: 110px; border-right: 1px solid #c8c6c4; display: flex; flex-direction: column; justify-content: space-between; flex: none; }
.group footer { text-align: center; font-size: 12.3px; line-height: 14px; height: 13px; }
.items { display: flex; padding-top: 6px; height: 96px; }
.cmd { display: flex; flex-direction: column; align-items: center; text-align: center; white-space: nowrap; line-height: 20px; height: 88px; flex: none; }
.cmd > svg, .paste > svg { margin-bottom: 3px; }
.sh5 > svg { margin-left: 5px; } .sh2 > svg { margin-left: 3px; } .sh-5 > svg { margin-right: 7px; }
.c { width: 8px; height: 6px; display: inline-block; margin-left: -1px; vertical-align: 1px; }
.off { color: #c3c1bf; }
.g-clip { width: 200px; }
.g-data { width: 449px; } .g-data .items { padding-left: 8px; }
.g-data .cmd:nth-child(1) { width: 54px; } .g-data .cmd:nth-child(2) { width: 67px; letter-spacing: -.5px; } .g-data .cmd:nth-child(3) { width: 69px; } .g-data .cmd:nth-child(4), .g-data .cmd:nth-child(5) { width: 50px; } .g-data .cmd:nth-child(6) { width: 72px; } .g-data .cmd:nth-child(7) { width: 66px; }
.g-query { width: 145px; } .g-query .items { padding-left: 11px; }
.g-query .cmd { width: 68px; } .g-query .cmd + .cmd { width: 56px; }
.g-insert { width: 183px; } .g-insert .items { padding-left: 9px; }
.g-insert .cmd { width: 50.5px; } .g-insert .cmd:last-child { width: 62px; }
.g-calc { width: 233px; } .g-calc .items { padding-left: 8px; }
.g-calc .cmd:nth-child(1) { width: 94px; } .g-calc .cmd:nth-child(2) { width: 58px; } .g-calc .cmd:nth-child(3) { width: 64px; }
.g-sens { width: 92px; } .g-pub { width: 74px; } .g-cop { width: 73px; }
.g-sens .cmd, .g-pub .cmd, .g-cop .cmd { width: 100%; }
.g-cop .cmd > svg { margin: 2px 0 5px; }
.paste { width: 67px; padding-left: 16px; line-height: 20px; }
.paste > svg { margin-left: 3px; }
.clips { font-size: 14.5px; margin: -6px 0 0 -3px; letter-spacing: -0.25px; }
.clips div { display: flex; gap: 5px; align-items: center; height: 30px; }
.collapse { margin: 98px 0 0 454px; }
.xl { font: bold 14px "Open Sans", sans-serif; fill: #fff; text-anchor: middle; }
.fx { font: italic bold 22px "Liberation Serif", serif; fill: #aaa; text-anchor: middle; }

/* Workspace */
.workspace { display: flex; height: 790px; flex: none; }
.rail { width: 50px; background: #f3f2f1; border-right: 1px solid #e1dfdd; }
.rail div { height: 50px; display: flex; align-items: center; justify-content: center; padding-right: 1px; }
.rail .on { height: 49px; border-left: 2px solid #117865; padding: 0 4px 0 0; }
.dax { font: bold 9.5px "Open Sans", sans-serif; fill: #605e5c; stroke: none; }
.main { width: 1417px; flex: none; }
.stage { display: flex; height: 746px; }
.canvas { width: 1376px; background: #fff; }
.page { margin-left: 32px; width: 1312px; height: 738px; border: dotted #555; border-width: 0 2px 2px; }
.page-top { display: flex; height: 652px; }
.analysis { width: 1106px; border-right: 2px solid #1267b8; }
.rule { height: 3px; background: linear-gradient(#5b9bd8, #0f68be 40%, #0f68be 60%, #8fbce4); }
.kpis { height: 105px; display: flex; align-items: flex-start; padding: 10px 0 0 24.5px; }
.kpis h2 { width: 213px; font-size: 17.5px; font-weight: 700; line-height: 26px; margin-top: 10px; letter-spacing: 0.15px; }
.kpi { border: 1px solid #252423; border-radius: 15px; background: #fff; box-shadow: 7px 7px 9px rgba(0,0,0,.28); height: 76.5px; display: flex; flex-direction: column; align-items: center; padding-top: 17px; }
.kpi b { font: 400 17px/22px Roboto, sans-serif; letter-spacing: 0; -webkit-text-stroke: .3px #252423; }
.kpi span { color: #666; font-size: 13.8px; line-height: 20px; margin-top: 6px; letter-spacing: -0.45px; }
.k1 { width: 277.5px; }
.k2 { width: 254px; margin: 1px 0 0 35.5px; }
.k3 { width: 234.5px; margin-left: 29.5px; padding-top: 15px; }
.k3 span { font-size: 16px; margin-top: 9px; letter-spacing: -0.3px; }
.visuals { display: flex; padding: 6px 0 0 24px; height: 544px; }
.col-charts { width: 391px; }
.card { border-radius: 9px; background: #fff; box-shadow: 0 0 0 1px #dcdbda, 8px 8px 9px rgba(0,0,0,.29); margin-bottom: 27px; letter-spacing: 0; }
.din { font-family: Roboto, sans-serif; font-weight: 500; fill: #252423; }
.din.t { font-size: 16px; font-weight: 400; stroke: #252423; stroke-width: .25px; }
.din.ax { font-size: 13.5px; }
.arc { transform: rotate(-90deg); transform-origin: 249px 378.3px; }
.lab { font-family: "Open Sans", sans-serif; font-size: 12px; fill: #605e5c; }
.lab.lt { font-size: 13.3px; font-weight: 700; }
.lab.lg { font-size: 13.5px; }
.lab.cat { font-size: 10.5px; fill: #252423; }
.col-tables { margin-left: 34px; width: 620px; }
.tile { background: #fff; box-shadow: 7px 7px 9px rgba(0,0,0,.29), 0 0 4px rgba(0,0,0,.08); padding-left: 4.5px; }
.tile h3 { font: 400 16px/22px Roboto, sans-serif; letter-spacing: .68px; height: 24px; }
.t1 { height: 235px; } .t2 { height: 267.5px; margin-top: 19px; }
.scroll { display: flex; gap: 10px; }
.bar { width: 8px; height: 104px; border-radius: 4px; background: #b3b2b1; margin-top: 1px; }
.mx { font-size: 13.6px; letter-spacing: -0.55px; line-height: 18px; }
.mx > div { display: grid; height: 30.6px; }
.t1 .mx > div { grid-template-columns: 117px 95.5px 95.5px 110.5px 74px 98.5px; }
.t2 .mx > div { grid-template-columns: 100.5px 84.5px 79px 89px 82px 104px 58.5px; }
.mx > div > * { text-align: right; padding: 7.5px 5px 0 0; white-space: nowrap; overflow: hidden; }
.t1 .mx > div > * { padding-top: 6.5px; }
.t1 .mx > .r1 > * { padding-top: 8px; }
.mx > div > :first-child { background: #252423; color: #fff; text-align: left; padding-left: 5px; border-right: 1px solid #1f6ab5; border-bottom: 1px solid #605e5c; border-left: 1px solid #777; }
.mx > div > b { background: #252423; color: #fff; font-weight: 700; border-bottom: 1px solid #605e5c; letter-spacing: -0.7px; }
.mx .hd > span, .mx > div.hd > :first-child { background: #252423; color: #fff; border-right: 1px solid #555; border-bottom: 2px solid #1467bd; border-top: 1px solid #555; }
.t1 .mx > .hd { height: 40px; } .t1 .mx > .hd > span { text-align: center; padding: 7px 0 0; position: relative; }
.t1 .mx > .r1 { height: 31.5px; } .t1 .mx > .r2 { height: 30px; } .t1 .mx > .r3 { height: 48px; } .t1 .mx > .r4 { height: 31px; } .t1 .mx > .r5 { height: 26px; }
.t2 .mx > .hd { height: 57px; } .t2 .mx > .hd > span { text-align: left; padding: 6px 0 0 5px; }
.t2 .mx > .sum { height: 31.5px; }
.t2 .mx > .sum > * { background: #252423; color: #fff; font-weight: 700; border-right: 1px solid #555; letter-spacing: -0.7px; padding-top: 8px; }
.tri { display: block; width: 0; height: 0; border: 5px solid transparent; border-top: 6px solid #fff; border-bottom: 0; }
.t1 .tri { position: absolute; left: 5px; bottom: 8px; }
.t2 .tri { margin-top: 19px; }
.slicers { padding-left: 22px; }
.slicers h2 { font: bold 18px/22px "Liberation Sans", Arial, sans-serif; letter-spacing: 0; margin: 19px 0 19.5px 50.5px; }
.slicer { width: 158px; height: 75px; border: 1px solid #d2d0ce; border-radius: 9px; background: #fff; box-shadow: 7px 8px 9px rgba(0,0,0,.29); padding: 7px 13px 0 12px; margin-bottom: 26px; }
.slicer p { font: 500 13px/20px Roboto, sans-serif; letter-spacing: .75px; padding-left: 4.5px; display: flex; justify-content: space-between; align-items: center; height: 20px; }
.slicer p svg { width: 12px; height: 7px; margin: -2px 3px 0 0; color: #605e5c; }
.slicer div { width: 132px; height: 28px; margin-top: 5.500px; border: 1px solid #edebe9; display: flex; justify-content: space-between; align-items: center; padding: 0 5px 0 6px; font: 13.5px Roboto, sans-serif; letter-spacing: .1px; color: #666; }
.slicer div svg { width: 13px; height: 8px; }
.s2, .s3 { margin-left: 1px; } .s3 { margin-bottom: 11px; }
.s4, .s5, .s6 { margin-left: 2px; } .s4 { height: 72.5px; margin-bottom: 24px; } .s5 { margin-bottom: 23.5px; }
.pagenav { display: flex; gap: 28.8px; padding: 17px 0 0 9px; }
.pagenav span { width: 235px; height: 55px; border: 1.5px solid #2b3038; border-radius: 13px; background: #fff; box-shadow: 0 0 8px 2px rgba(70,165,250,.75), 3px 4px 7px rgba(20,90,180,.75); text-align: center; line-height: 53px; font-size: 13.5px; flex: none; letter-spacing: -0.36px; }
.pagenav .cur { background: #252423; color: #fff; }
.filters-pane { width: 41px; border-left: 1px solid #b3b0ad; background: #fff; display: flex; flex-direction: column; align-items: center; padding: 16px 0 0 0; }
.filters-pane .flip { transform: scaleX(-1); margin-bottom: 19px; margin-left: 1px; }
.filters-pane .fun { margin-left: 7px; }
.filters-pane span { writing-mode: vertical-rl; font-weight: 600; font-size: 17.5px; line-height: 20px; margin-top: 11px; letter-spacing: .1px; }

/* Page tabs */
.tabs { height: 44px; background: #f3f2f1; display: flex; font-size: 15.3px; letter-spacing: -0.42px; line-height: 44px; }
.tabs > span { background: #fff; border-right: 1px solid #c8c6c4; text-align: center; flex: none; position: relative; }
.devices { width: 160px; border-right: 1px solid #979593; display: flex; align-items: flex-start; padding: 6px 0 0 12px; }
.pc { width: 30px; height: 32px; border-bottom: 3px solid #117865; padding: 3px 0 0 3px; margin-right: 32px; }
.a1 { margin: 10px 22px 0 26px; } .a2 { margin-top: 10px; }
.w1 { width: 91px; } .w2 { width: 177px; } .w3 { width: 165px; } .w4 { width: 184px; } .w5 { width: 147.5px; }
.tabs .cur { font-weight: 600; border-bottom: 5px solid #117865; letter-spacing: -0.64px; }
.tabs i { position: absolute; right: 6px; top: 3px; font: bold 12px/18px "Open Sans", sans-serif; }
.add { width: 50px; background: #117865; display: flex; align-items: center; justify-content: center; padding-bottom: 3px; }

/* Side panes */
.viz { width: 226px; background: #f3f2f1; border-left: 1px solid #e1dfdd; flex: none; }
.data { width: 225px; background: #f3f2f1; border-left: 1px solid #d8d6d4; flex: none; }
.phead { display: flex; justify-content: space-between; padding: 12px 9px 0 10px; height: 46px; }
.phead h1 { font-size: 18.8px; line-height: 26px; letter-spacing: -0.1px; }
.phead .dh { letter-spacing: -0.3px; }
.phead svg { margin-top: 4px; }
h4 { font-size: 14.5px; line-height: 23px; height: 26px; padding-left: 10px; letter-spacing: -0.22px; }
.modes { display: flex; gap: 48px; padding-left: 10px; align-items: center; }
.modes .sel { width: 40px; height: 40px; background: #d2d0ce; border-radius: 3px; padding: 5px; }
.notch { margin-top: 5.5px; height: 12px; }
.grid { display: grid; grid-template-columns: repeat(6, 23px); grid-auto-rows: 23px; gap: 12px; padding: 12.5px 0 11px 14px; border-bottom: 1px solid #dad8d6; }
.grid svg { width: 23px; height: 23px; overflow: visible; }
.w { fill: #fafafa; stroke: #484644; stroke-width: 1.4; }
.b { fill: #83beec; stroke: #1066b4; stroke-width: 1.4; }
.bn { fill: #83beec; }
.g { fill: #c8c6c4; stroke: #8a8886; stroke-width: 1.4; }
.o { fill: #f7a94b; stroke: #d9690b; stroke-width: 1; }
.x, .ld { fill: none; stroke: #3b3a39; stroke-width: 1.5; }
.lb { fill: none; stroke: #1a78c2; stroke-width: 1.4; }
.lb2 { fill: none; stroke: #1066b4; stroke-width: 2; }
.lg2 { fill: none; stroke: #797775; stroke-width: 1.3; }
.p { fill: none; stroke: #8c3a9a; stroke-width: 1.4; }
.y { fill: none; stroke: #1a86dc; stroke-width: 1.5; }
.n { font: 11px "Open Sans", sans-serif; letter-spacing: -0.5px; fill: #2488cf; text-anchor: middle; }
.big { font: bold 19px "Open Sans", sans-serif; fill: #2387c4; text-anchor: middle; }
.wells { padding: 10px 6px 0 5px; }
.wells label { display: block; line-height: 22px; padding-left: 10px; }
.well { background: #fff; border: 1px dashed #c0bebc; border-radius: 2px; width: 213px; white-space: nowrap; }
.v1 { height: 35px; line-height: 32px; padding-left: 13px; margin-top: 6px; letter-spacing: -0.17px; }
.v2 { height: 32px; line-height: 30px; padding-left: 10px; margin-top: 13px; letter-spacing: -0.05px; }
.wells .dt { font-weight: 500; color: #3b3a39; margin-top: 12px; letter-spacing: .15px; -webkit-text-stroke: .3px #3b3a39; }
.opt { display: flex; justify-content: space-between; align-items: center; height: 20px; margin-top: 9px; padding: 0 21px 0 10px; letter-spacing: -0.3px; }
.o2 { margin-top: 14px; letter-spacing: -0.2px; }
.tog { width: 40px; height: 20px; border: 1px solid #8a8886; border-radius: 10px; background: #fff; display: flex; align-items: center; font-size: 11.5px; color: #605e5c; gap: 2px; padding-left: 5px; letter-spacing: 0; line-height: 18px; }
.tog i { width: 10px; height: 10px; border-radius: 50%; background: #605e5c; }
.onn { background: #117865; border-color: #117865; color: #fff; gap: 4px; letter-spacing: -.3px; }
.onn i { background: #fff; }
.search { margin: 11px 4px 0 5px; height: 30px; border: 1px solid #c8c6c4; border-bottom: 1px solid #605e5c; border-radius: 4px; background: #fff; display: flex; align-items: center; gap: 9px; padding-left: 15px; font-size: 16px; color: #707070; }
.search span { padding-top: 2px; }
.tree { padding: 12px 0 0 19px; font-size: 14.5px; letter-spacing: -0.2px; }
.tree div { display: flex; align-items: center; height: 30px; line-height: 24px; gap: 6px; color: #323130; }
.ar { width: 8px; height: 14px; margin-right: 3px; }

/* Status bar */
.status { height: 29px; background: #f3f2f1; border-top: 1px solid #d8d6d4; display: flex; justify-content: space-between; align-items: center; padding: 3px 22px 0 4px; font-size: 14.8px; letter-spacing: -.2px; color: #484644; }
.zoom { display: flex; align-items: center; font-size: 14px; letter-spacing: -0.4px; color: #605e5c; margin-top: -2px; }
.zoom span { width: 53px; padding-left: 16px; margin-right: 16px; }
```
